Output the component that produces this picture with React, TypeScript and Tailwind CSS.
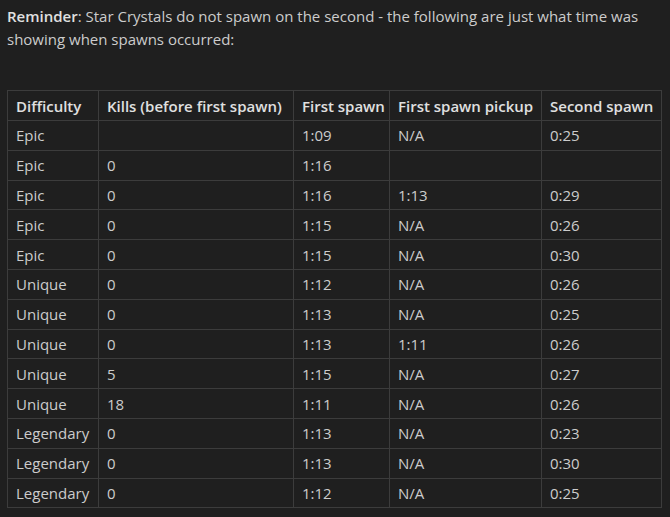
const ROWS: string[][] = [
  ["Epic", "", "1:09", "N/A", "0:25"],
  ["Epic", "0", "1:16", "", ""],
  ["Epic", "0", "1:16", "1:13", "0:29"],
  ["Epic", "0", "1:15", "N/A", "0:26"],
  ["Epic", "0", "1:15", "N/A", "0:30"],
  ["Unique", "0", "1:12", "N/A", "0:26"],
  ["Unique", "0", "1:13", "N/A", "0:25"],
  ["Unique", "0", "1:13", "1:11", "0:26"],
  ["Unique", "5", "1:15", "N/A", "0:27"],
  ["Unique", "18", "1:11", "N/A", "0:26"],
  ["Legendary", "0", "1:13", "N/A", "0:23"],
  ["Legendary", "0", "1:13", "N/A", "0:30"],
  ["Legendary", "0", "1:12", "N/A", "0:25"],
];

const HEADERS = ["Difficulty", "Kills (before first spawn)", "First spawn", "First spawn pickup", "Second spawn"];
const WIDTHS = ["w-[91px]", "w-[195px]", "w-[96px]", "w-[152px]", "w-[120px]"];

export default function App() {
  return (
    <div className="min-h-[517px] w-[670px] bg-[#1f1f1f] px-[7px] pt-[5px] text-[15px] text-[#cccccc]" style={{ fontFamily: '"Segoe UI", "Open Sans", sans-serif' }}>
      <p className="leading-[23px]">
        <strong className="font-semibold text-[#e0e0e0]">Reminder</strong>: Star Crystals do not spawn on the second - the following are just what time was showing when spawns occurred:
      </p>
      <table className="mt-[39px] w-[654px] table-fixed border-collapse">
        <thead>
          <tr className="h-[30px]">
            {HEADERS.map((h, i) => (
              <th key={h} className={`${WIDTHS[i]} whitespace-nowrap border border-[#3c3c3c] px-[8px] text-left font-semibold leading-[20px] text-[#e0e0e0]`}>
                {h}
              </th>
            ))}
          </tr>
        </thead>
        <tbody>
          {ROWS.map((r, ri) => (
            <tr key={ri} className="h-[29.8px]">
              {r.map((c, ci) => (
                <td key={ci} className="whitespace-nowrap border border-[#3c3c3c] px-[8px] leading-[20px]">
                  {c}
                </td>
              ))}
            </tr>
          ))}
        </tbody>
      </table>
    </div>
  );
}
